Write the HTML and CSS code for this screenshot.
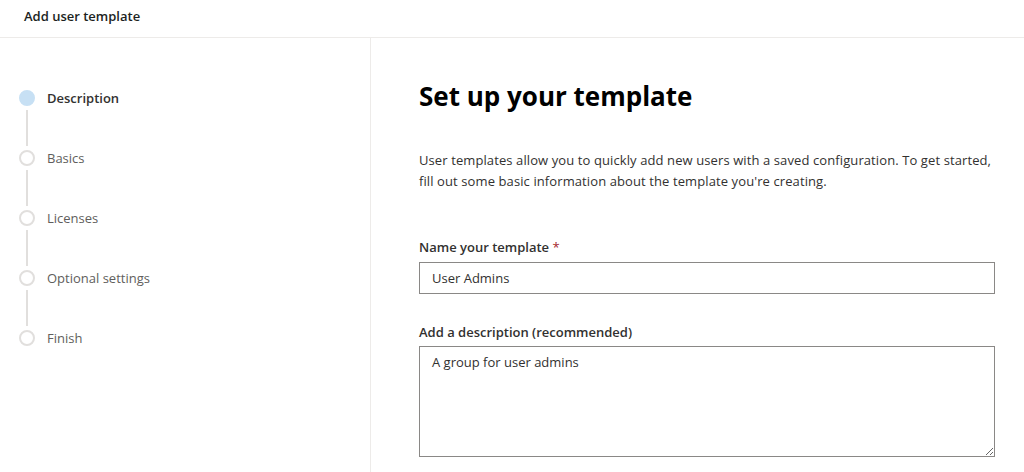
FILE: index.html
```html
<!DOCTYPE html>
<html>
<head>
<meta charset="utf-8">
<link rel="stylesheet" href="styles.css">
</head>
<body>
<header class="topbar"><span class="title">Add user template</span></header>
<div class="main">
  <nav class="steps">
    <div class="step active"><span class="dot"></span><span class="label">Description</span></div>
    <div class="connector"></div>
    <div class="step"><span class="dot"></span><span class="label">Basics</span></div>
    <div class="connector"></div>
    <div class="step"><span class="dot"></span><span class="label">Licenses</span></div>
    <div class="connector"></div>
    <div class="step"><span class="dot"></span><span class="label">Optional settings</span></div>
    <div class="connector"></div>
    <div class="step"><span class="dot"></span><span class="label">Finish</span></div>
  </nav>
  <section class="content">
    <h1 class="heading">Set up your template</h1>
    <p class="intro">User templates allow you to quickly add new users with a saved configuration. To get started, fill out some basic information about the template you're creating.</p>
    <label class="field-label">Name your template <span class="req">*</span></label>
    <input class="text-input" type="text" value="User Admins">
    <label class="field-label second">Add a description (recommended)</label>
    <textarea class="text-area">A group for user admins</textarea>
  </section>
</div>
</body>
</html>
```
FILE: styles.css
```css
* { box-sizing: border-box; }
html, body { margin: 0; padding: 0; background: #fff; }
body {
  font-family: "Open Sans", "Noto Sans", sans-serif;
  color: #323130;
  width: 1024px;
  height: 472px;
  overflow: hidden;
}
.topbar {
  height: 38px;
  border-bottom: 1px solid #edebe9;
  display: flex;
  align-items: center;
  padding-left: 24px;
}
.title {
  font-size: 13px;
  font-weight: 600;
  color: #201f1e;
  margin-top: -6px;
}
.main {
  display: flex;
  height: 434px;
}
.steps {
  width: 371px;
  border-right: 1px solid #edebe9;
  padding: 52px 0 0 19px;
  display: flex;
  flex-direction: column;
}
.step {
  display: flex;
  align-items: center;
  height: 16px;
}
.dot {
  width: 16px;
  height: 16px;
  border-radius: 50%;
  border: 2px solid #e1dfdd;
  background: #fff;
  flex: none;
}
.step.active .dot {
  background: #c7e0f4;
  border-color: #c7e0f4;
}
.label {
  margin-left: 12px;
  font-size: 13px;
  color: #605e5c;
}
.step.active .label {
  color: #323130;
  font-weight: 600;
}
.connector {
  width: 2px;
  height: 36px;
  margin: 4px 0 4px 7px;
  background: #e1dfdd;
}
.content {
  flex: 1;
  padding: 40px 29px 0 48px;
  display: flex;
  flex-direction: column;
}
.heading {
  margin: 0;
  font-size: 26px;
  font-weight: 700;
  color: #000;
  line-height: 36px;
}
.intro {
  margin: 36px 0 0 0;
  font-size: 13px;
  line-height: 21px;
  letter-spacing: 0.1px;
  color: #323130;
}
.field-label {
  margin-top: 45px;
  font-size: 13px;
  font-weight: 600;
  color: #323130;
  line-height: 20px;
}
.field-label.second { margin-top: 28px; }
.req { color: #a4262c; font-weight: 400; }
.text-input, .text-area {
  margin-top: 5px;
  width: 576px;
  border: 1px solid #8a8886;
  border-radius: 0;
  font-family: inherit;
  font-size: 13px;
  color: #323130;
  padding: 0 12px;
  outline: none;
}
.text-input { height: 32px; }
.text-area {
  margin-top: 4px;
  height: 111px;
  padding: 5px 12px;
  line-height: 20px;
  resize: both;
}
```
